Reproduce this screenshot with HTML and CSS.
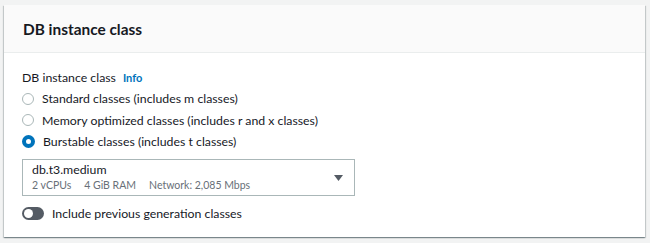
FILE: index.html
```html
<!DOCTYPE html>
<html lang="en">
<head>
<meta charset="UTF-8">
<title>DB instance class</title>
<link rel="stylesheet" href="styles.css">
</head>
<body>
  <div class="container">
    <div class="header">
      <h2>DB instance class</h2>
    </div>
    <div class="content">
      <div class="label">DB instance class <a class="info" href="#">Info</a></div>
      <div class="options">
        <label class="option"><span class="radio"></span>Standard classes (includes m classes)</label>
        <label class="option"><span class="radio"></span>Memory optimized classes (includes r and x classes)</label>
        <label class="option"><span class="radio checked"></span>Burstable classes (includes t classes)</label>
      </div>
      <div class="select">
        <div class="select-text">
          <div class="select-title">db.t3.medium</div>
          <div class="select-tags">
            <span>2 vCPUs</span>
            <span>4 GiB RAM</span>
            <span>Network: 2,085 Mbps</span>
          </div>
        </div>
        <svg class="caret" width="9" height="6" viewBox="0 0 9 6"><path d="M0 0 L9 0 L4.5 6 Z" fill="#545b64"/></svg>
      </div>
      <div class="toggle-row">
        <span class="toggle"><span class="knob"></span></span>
        Include previous generation classes
      </div>
    </div>
  </div>
</body>
</html>
```

FILE: styles.css
```css
body {
  margin: 0;
  background-color: #f2f3f3;
  font-family: Lato, Arial, sans-serif;
  color: #16191f;
  font-size: 12.3px;
}
.container {
  margin: 5px 5px 5px 4px;
  background-color: #fff;
  box-shadow: 0 1px 1px 0 rgba(0, 28, 36, 0.3), 1px 1px 1px 0 rgba(0, 28, 36, 0.15), -1px 1px 1px 0 rgba(0, 28, 36, 0.15);
}
.header {
  background-color: #fafafa;
  border-bottom: 1px solid #eaeded;
  height: 47px;
  padding: 0 19px;
  display: flex;
  align-items: center;
}
.header h2 {
  margin: 0;
  font-size: 15.4px;
  font-weight: 700;
  line-height: 22px;
}
.content {
  padding: 14px 18px 13px 18px;
}
.label {
  height: 20px;
  display: flex;
  align-items: center;
  gap: 7px;
}
.info {
  color: #0073bb;
  font-weight: 700;
  font-size: 11px;
  text-decoration: none;
}
.options {
  display: flex;
  flex-direction: column;
  margin-top: 1px;
}
.option {
  display: flex;
  align-items: center;
  height: 21.5px;
}
.radio {
  width: 10px;
  height: 10px;
  border: 1.5px solid #aab7b8;
  border-radius: 50%;
  margin-right: 8px;
  box-sizing: content-box;
}
.radio.checked {
  border: 4px solid #0073bb;
  width: 5px;
  height: 5px;
}
.select {
  margin-top: 6px;
  width: 333px;
  height: 37px;
  border: 1px solid #aab7b8;
  box-sizing: border-box;
  display: flex;
  align-items: center;
  justify-content: space-between;
  padding: 0 11px 0 9px;
}
.select-title {
  line-height: 16px;
}
.select-tags {
  display: flex;
  gap: 13px;
  font-size: 10.5px;
  color: #687078;
  line-height: 14px;
}
.caret {
  margin-top: 1px;
}
.toggle-row {
  margin-top: 8px;
  height: 20px;
  display: flex;
  align-items: center;
  gap: 8px;
}
.toggle {
  width: 20px;
  height: 13px;
  border-radius: 7px;
  background-color: #545b64;
  display: flex;
  align-items: center;
  padding: 0 1px;
}
.knob {
  width: 9px;
  height: 9px;
  border-radius: 50%;
  background-color: #fff;
  margin-left: 1px;
}
```
